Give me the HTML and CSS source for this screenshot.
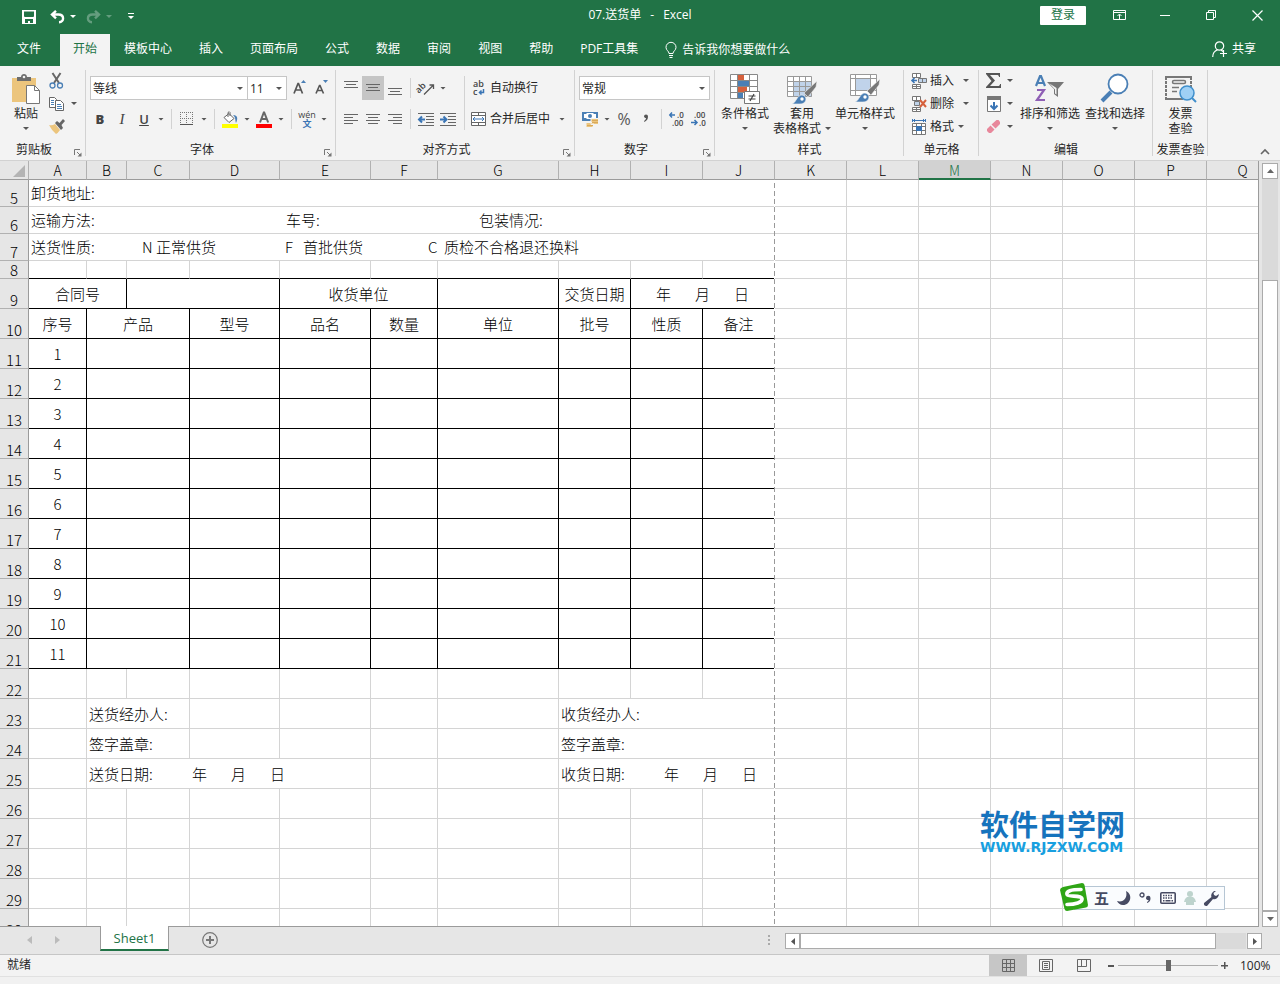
FILE: index.html
```html
<!DOCTYPE html>
<html lang="zh-CN">
<head>
<meta charset="utf-8">
<title>07.送货单 - Excel</title>
<link rel="stylesheet" href="styles.css">
</head>
<body>
<header class="titlebar">
  <div class="quick">
    <button class="qbtn" aria-label="保存"><svg width="14" height="14" viewBox="0 0 14 14"><path fill="#fff" fill-rule="evenodd" d="M0 0h14v14H0zM2 1.500v5l1 .5h8l1-.5v-5zM3 9v4h3v-2h2v2h3V9z"/></svg></button>
    <button class="qbtn undo" aria-label="撤消"><svg width="15" height="14" viewBox="0 0 15 14" fill="none" stroke="#fff" stroke-width="2.400"><path d="M6 .8 2 4.500l4 3.800M2 4.500h6.500c6 0 6 7.500.5 7.700"/></svg><span class="caret"></span></button>
    <button class="qbtn redo" aria-label="恢复"><svg width="15" height="14" viewBox="0 0 15 14" fill="none" stroke="#fff" stroke-width="2.400"><path d="M9 .8 13 4.500 9 8.300M13 4.500H6.500c-6 0-6 7.500-.5 7.700"/></svg><span class="caret"></span></button>
    <button class="qbtn" aria-label="自定义快速访问工具栏"><svg width="6" height="7" viewBox="0 0 6 7"><path fill="#fff" d="M0 0h6v1H0zM0 3h6L3 6z"/></svg></button>
  </div>
  <h1 class="doc"><span>07.送货单</span><span>-</span><span>Excel</span></h1>
  <div class="winctl">
    <button class="login">登录</button>
    <button class="wbtn" aria-label="功能区显示选项"><svg width="13" height="11" viewBox="0 0 13 11" fill="none" stroke="#fff"><path d="M.5.500h12v9H.5zM1 2.500h11M6.500 9V4.500M4.500 6l2-2 2 2"/></svg></button>
    <button class="wbtn" aria-label="最小化"><svg width="11" height="11" viewBox="0 0 11 11"><path d="M0 5h10v1H0z" fill="#fff"/></svg></button>
    <button class="wbtn" aria-label="还原"><svg width="11" height="11" viewBox="0 0 11 11" fill="none" stroke="#fff"><path d="M.5 2.500h7v7h-7zM2.500 2V.5h7v7H8"/></svg></button>
    <button class="wbtn" aria-label="关闭"><svg width="11" height="11" viewBox="0 0 11 11" stroke="#fff" stroke-width="1.200"><path d="m.5.500 10 10M10.500.500l-10 10"/></svg></button>
  </div>
</header>

<nav class="tabs">
  <button class="tab file">文件</button>
  <button class="tab active">开始</button>
  <button class="tab">模板中心</button>
  <button class="tab">插入</button>
  <button class="tab">页面布局</button>
  <button class="tab">公式</button>
  <button class="tab">数据</button>
  <button class="tab">审阅</button>
  <button class="tab">视图</button>
  <button class="tab">帮助</button>
  <button class="tab">PDF工具集</button>
  <button class="tab tell"><svg width="12" height="16" viewBox="0 0 12 16" fill="none" stroke="#fff"><path d="M4 11.500C4 9 1 8.500 1 5.300a5 5 0 0 1 10 0C11 8.500 8 9 8 11.500zM4 13.500h4M4.500 15.500h3"/></svg>告诉我你想要做什么</button>
  <button class="tab share"><svg width="16" height="17" viewBox="0 0 16 17" fill="none" stroke="#fff" stroke-width="1.200"><circle cx="7.500" cy="5" r="4.200"/><path d="M.7 16c0-4 2-6 4.800-7.200M9 9l2 1.500M8 12.500h7M11.500 9v7"/></svg>共享</button>
</nav>

<section class="ribbon">
  <div class="group g-clip">
    <div class="body">
      <button class="big"><span class="pic"><svg width="28" height="30" viewBox="0 0 28 30"><path fill="#ecc57d" d="M0 4h24v24H0z"/><path fill="#6d6d6d" d="M5 7V3h4c0-4 6-4 6 0h4v4z"/><circle cx="12" cy="3" r="1.300" fill="#f3f3f3"/><path fill="#fff" stroke="#777" d="M14.500 11.500h8l5 5v13h-13z"/><path fill="none" stroke="#777" d="M22.500 11.500v5h5"/></svg></span>粘贴<span class="caret"></span></button>
      <div class="stack">
        <button class="ib" aria-label="剪切"><svg width="15" height="16" viewBox="0 0 15 16" fill="none"><path stroke="#666" stroke-width="2" d="M3.500 0 10 10M11.500 0 5 10"/><circle cx="3.500" cy="12.500" r="2.500" stroke="#4a7fb5" stroke-width="1.300"/><circle cx="11" cy="12.500" r="2.500" stroke="#4a7fb5" stroke-width="1.300"/></svg></button>
        <button class="ib" aria-label="复制"><svg width="15" height="14" viewBox="0 0 15 14" fill="#fff" stroke="#666"><path d="M.5.500h5l2 2v8h-7z"/><path d="M6.500 3.500h5l3 3v7h-8z"/><path stroke="#4a7fb5" d="M2 3.500h3M2 5.500h3M2 7.500h3M8 7.500h4M8 9.500h5M8 11.500h5"/></svg><span class="caret"></span></button>
        <button class="ib" aria-label="格式刷"><svg width="16" height="15" viewBox="0 0 16 15"><path fill="#ecc57d" d="M0 6q3 1 6-1l5 6q-2 3-4 4-4-3-7-9"/><path fill="#666" d="m6 4 2-2 2.500 2L14 0l2 2-3.500 4L14 9l-2 2z"/></svg></button>
      </div>
    </div>
    <div class="label"><span>剪贴板</span><button class="launch" aria-label="剪贴板设置"><svg width="8" height="8" viewBox="0 0 8 8"><path fill="none" stroke="#777" d="M.5 6V.500H6M3 3l3 3"/><path fill="#777" d="M7.500 3.500v4h-4z"/></svg></button></div>
  </div>

  <div class="group g-font">
    <div class="body rows">
      <div class="row">
        <span class="sel font"><select aria-label="字体"><option>等线</option></select></span><span class="sel size"><select aria-label="字号"><option>11</option></select></span>
        <button class="tb first" aria-label="增大字号"><svg width="14" height="16" viewBox="0 0 14 16"><path fill="none" stroke="#555" stroke-width="1.700" d="M1 13.500 5 3.500h.5l4 10M2.500 10h6"/><path fill="#4a7fb5" d="M8 3h5l-2.500-3z"/></svg></button>
        <button class="tb" aria-label="减小字号"><svg width="14" height="16" viewBox="0 0 14 16"><path fill="none" stroke="#555" stroke-width="1.600" d="M1 13.500 4.500 5.500H5l3.500 8M2.500 10.500h5"/><path fill="#4a7fb5" d="M8 0h5l-2.500 3z"/></svg></button>
      </div>
      <div class="row">
        <button class="tb glyph" aria-label="加粗"><b>B</b></button><button class="tb glyph" aria-label="倾斜"><i>I</i></button><button class="tb glyph" aria-label="下划线"><u>U</u></button><button class="cb" aria-label="下划线选项"><span class="caret"></span></button>
        <span class="sep"></span>
        <button class="tb" aria-label="边框"><svg width="14" height="14" viewBox="0 0 14 14" fill="none" stroke="#777"><path stroke-dasharray="1 1" d="M0 .5h13M.5 0v12M12.500 0v12M6.500 0v12M0 6.500h13"/><path stroke="#555" d="M0 12.500h13"/></svg></button><button class="cb" aria-label="边框选项"><span class="caret"></span></button>
        <span class="sep"></span>
        <button class="tb" aria-label="填充颜色"><svg width="16" height="17" viewBox="0 0 16 17"><path fill="#fff" stroke="#666" d="m2 6.500 5-4 5 5-5 4zM6 6V1.500q1.500-1.500 2 0V5"/><path fill="#4a7fb5" d="M11 4c5 0 5 4 3 8-1-3 0-5-3-8"/><path fill="#ff0" d="M0 13h16v4H0z"/></svg></button><button class="cb" aria-label="填充颜色选项"><span class="caret"></span></button>
        <button class="tb" aria-label="字体颜色"><svg width="16" height="17" viewBox="0 0 16 17"><path fill="none" stroke="#666" stroke-width="2" d="m4 11.500 3.800-10h.4l4 10M5.500 8h5"/><path fill="red" d="M0 13h16v4H0z"/></svg></button><button class="cb" aria-label="字体颜色选项"><span class="caret"></span></button>
        <span class="sep"></span>
        <button class="tb wen" aria-label="拼音"><span>wén</span><span class="zi">文</span></button><button class="cb" aria-label="拼音选项"><span class="caret"></span></button>
      </div>
    </div>
    <div class="label"><span>字体</span><button class="launch" aria-label="字体设置"><svg width="8" height="8" viewBox="0 0 8 8"><path fill="none" stroke="#777" d="M.5 6V.500H6M3 3l3 3"/><path fill="#777" d="M7.500 3.500v4h-4z"/></svg></button></div>
  </div>

  <div class="group g-align">
    <div class="body">
      <div class="rows">
        <div class="row">
          <button class="tb" aria-label="顶端对齐"><svg width="14" height="14" viewBox="0 0 14 14" stroke="#666"><path d="M0 .5h14M2 3.500h10M0 6.500h14"/></svg></button><button class="tb on" aria-label="垂直居中"><svg width="14" height="14" viewBox="0 0 14 14" stroke="#666"><path d="M0 3.500h14M2 6.500h10M0 9.500h14"/></svg></button><button class="tb" aria-label="底端对齐"><svg width="14" height="14" viewBox="0 0 14 14" stroke="#666"><path d="M0 7.500h14M2 10.500h10M0 13.500h14"/></svg></button>
          <span class="sep"></span>
          <button class="tb" aria-label="方向"><svg width="17" height="16" viewBox="0 0 17 16"><text x="-2" y="9" class="ab" transform="rotate(-45 5 8)">ab</text><path fill="none" stroke="#555" stroke-width="1.300" d="m6 14.500 9-9M11.500 5h4v4"/></svg></button><button class="cb" aria-label="方向选项"><span class="caret"></span></button>
        </div>
        <div class="row">
          <button class="tb" aria-label="左对齐"><svg width="14" height="12" viewBox="0 0 14 12" stroke="#666"><path d="M0 1.500h14M0 4.500h9M0 7.500h14M0 10.500h9"/></svg></button><button class="tb" aria-label="居中"><svg width="14" height="12" viewBox="0 0 14 12" stroke="#666"><path d="M0 1.500h14M2 4.500h10M0 7.500h14M2 10.500h10"/></svg></button><button class="tb" aria-label="右对齐"><svg width="14" height="12" viewBox="0 0 14 12" stroke="#666"><path d="M0 1.500h14M5 4.500h9M0 7.500h14M5 10.500h9"/></svg></button>
          <span class="sep"></span>
          <button class="tb" aria-label="减少缩进量"><svg width="17" height="13" viewBox="0 0 17 13" fill="none" stroke="#666"><path d="M0 .5h16M8 3.500h8M8 6.500h8M8 9.500h8M0 12.500h16"/><path stroke="#3a75b5" stroke-width="2" d="M7 6.500H1.500M4 3.500l-3 3 3 3"/></svg></button><button class="tb" aria-label="增加缩进量"><svg width="17" height="13" viewBox="0 0 17 13" fill="none" stroke="#666"><path d="M0 .5h16M8 3.500h8M8 6.500h8M8 9.500h8M0 12.500h16"/><path stroke="#3a75b5" stroke-width="2" d="M0 6.500h6M3.500 3.500l3 3-3 3"/></svg></button>
        </div>
      </div>
      <span class="sep tall"></span>
      <div class="rows">
        <button class="lb"><svg width="16" height="16" viewBox="0 0 16 16"><text x="2" y="7" class="ab">ab</text><text x="2" y="15" class="ab">c</text><path fill="none" stroke="#3a75b5" stroke-width="1.500" d="M12.500 9v3.500H8.500M10.500 10.500l-2 2 2 2"/></svg>自动换行</button>
        <button class="lb"><svg width="16" height="16" viewBox="0 0 16 16" fill="#fff" stroke="#666"><path d="M.5 1.500h14v13H.5zM.5 4.500h14M.5 11.500h14M7.500 1.500v3M7.500 11.500v3"/><path fill="none" stroke="#3a75b5" d="M2 8h11M4 6 2 8l2 2M11 6l2 2-2 2"/></svg>合并后居中<span class="caret far"></span></button>
      </div>
    </div>
    <div class="label"><span>对齐方式</span><button class="launch" aria-label="对齐设置"><svg width="8" height="8" viewBox="0 0 8 8"><path fill="none" stroke="#777" d="M.5 6V.500H6M3 3l3 3"/><path fill="#777" d="M7.500 3.500v4h-4z"/></svg></button></div>
  </div>

  <div class="group g-num">
    <div class="body rows">
      <div class="row"><span class="sel num"><select aria-label="数字格式"><option>常规</option></select></span></div>
      <div class="row">
        <button class="tb" aria-label="会计数字格式"><svg width="17" height="17" viewBox="0 0 17 17"><path fill="#4a7fb5" d="M0 1h16v9H0z"/><path fill="#fff" d="M2 3h2l1-1h6l1 1h2v4h-2l-1 1H5L4 7H2z"/><circle cx="8" cy="5" r="2" fill="#4a7fb5"/><path fill="#ecc57d" stroke="#f3f3f3" d="M9 7.500h7.500v6H9zM4 11.500h7v5H4z"/><path stroke="#d9a95a" d="M10 9.500h6M10 11.500h6M5 14.500h6"/></svg></button><button class="cb" aria-label="会计格式选项"><span class="caret"></span></button><button class="tb pct" aria-label="百分比样式">%</button><button class="tb" aria-label="千位分隔样式"><svg width="8" height="14" viewBox="0 0 8 14"><path fill="#555" d="M2 4.500a2 2 0 1 1 4 0C6 7 5 8.500 2.500 10L2 9c1.500-1 2-2 2-3-1 0-2-.6-2-1.500"/></svg></button>
        <span class="sep"></span>
        <button class="tb" aria-label="增加小数位数"><svg width="16" height="16" viewBox="0 0 16 16"><text x="8" y="7" class="dec">.0</text><text x="3" y="15" class="dec">.00</text><path fill="none" stroke="#3a75b5" stroke-width="1.500" d="M6 4H1M3 1.500.8 4 3 6.500"/></svg></button><button class="tb" aria-label="减少小数位数"><svg width="16" height="16" viewBox="0 0 16 16"><text x="3" y="7" class="dec">.00</text><text x="8" y="15" class="dec">.0</text><path fill="none" stroke="#3a75b5" stroke-width="1.500" d="M0 11.500h5.500M3.500 9l2.500 2.500L3.500 14"/></svg></button>
      </div>
    </div>
    <div class="label"><span>数字</span><button class="launch" aria-label="数字设置"><svg width="8" height="8" viewBox="0 0 8 8"><path fill="none" stroke="#777" d="M.5 6V.500H6M3 3l3 3"/><path fill="#777" d="M7.500 3.500v4h-4z"/></svg></button></div>
  </div>

  <div class="group g-style">
    <div class="body">
      <button class="big"><span class="pic"><svg width="30" height="30" viewBox="0 0 30 30"><path fill="#fff" stroke="#888" d="M.5.500h27v24H.5zM.5 6.500h27M.5 12.500h27M.5 18.500h27M7.500.500v24M19.500.500v24"/><path fill="#d6603c" d="M8 1h6v5H8zM8 13h9v5H8z"/><path fill="#4a7fb5" d="M8 7h11v5H8zM8 19h5v5H8z"/><path fill="#fff" stroke="#777" d="M14.500 17.500h15v12h-15z"/><path stroke="#444" stroke-width="1.200" d="M18.500 22h7M18.500 25h7M24 20l-4 7"/></svg></span>条件格式<span class="caret"></span></button>
      <button class="big"><span class="pic"><svg width="30" height="30" viewBox="0 0 30 30"><path fill="#fff" d="M1 2h24v21H1z"/><path fill="#c0d3ea" d="M7 7h18v16H7z"/><path fill="none" stroke="#999" d="M.5 2.500h24v20H.5zM.5 7.500h24M.5 12.500h24M.5 17.500h24M6.500 2.500v20M12.500 2.500v20M18.500 2.500v20"/><path fill="#777" stroke="#f3f3f3" stroke-width=".6" d="m30 7-1 6-8 10-4-4z"/><path fill="#4a7fb5" stroke="#f3f3f3" stroke-width=".6" d="M5 30c4-1 5-9 10-9 6 1 5 9-2 9z"/><circle cx="15" cy="25" r="1.700" fill="#fff"/></svg></span>套用<span class="line">表格格式 <span class="caret"></span></span></button>
      <button class="big"><span class="pic"><svg width="30" height="30" viewBox="0 0 30 30"><path fill="#fff" stroke="#999" d="M.5.500h26v21H.5zM.5 4.500h26M.5 16.500h26M5.500.500v21M20.500.500v21"/><path fill="#c0d3ea" d="M6 5h14v11H6z"/><path fill="#777" stroke="#f3f3f3" stroke-width=".6" d="m30 5-1 6-8 10-4-4z"/><path fill="#4a7fb5" stroke="#f3f3f3" stroke-width=".6" d="M5 28c4-1 5-9 10-9 6 1 5 9-2 9z"/><circle cx="15" cy="23" r="1.700" fill="#fff"/></svg></span>单元格样式<span class="caret"></span></button>
    </div>
    <div class="label"><span>样式</span></div>
  </div>

  <div class="group g-cell">
    <div class="body stack">
      <button class="lb"><svg width="16" height="16" viewBox="0 0 16 16" fill="#fff" stroke="#777"><path d="M1.500.500h8v4h-8zM5.500.500v4M1.500 11.500h8v4h-8zM5.500 11.500v4M1.500 13.500h8"/><path fill="#c0d3ea" d="M7.500 5.500h8v4h-8zM11.500 5.500v4"/><path fill="none" stroke="#3a75b5" stroke-width="1.600" d="M6 7.500H1M3.500 5 1 7.500 3.500 10"/></svg>插入<span class="caret"></span></button>
      <button class="lb"><svg width="16" height="16" viewBox="0 0 16 16" fill="#fff" stroke="#777"><path d="M1.500.500h8v4h-8zM5.500.500v4M1.500 11.500h8v4h-8zM5.500 11.500v4M1.500 13.500h8"/><path fill="#c0d3ea" d="M3.500 5.500h5v4h-5z"/><path stroke="#d6603c" stroke-width="2" d="m9 4 6 7M15 4l-6 7"/></svg>删除<span class="caret"></span></button>
      <button class="lb short"><svg width="16" height="16" viewBox="0 0 16 16" fill="#fff" stroke="#777"><path d="M1.500 4.500h13v11h-13zM1.500 7.500h13M1.500 11.500h13M5.500 4.500v11M10.500 4.500v11"/><path fill="#3a75b5" stroke="none" d="M5 7h6v5H5z"/><path fill="none" stroke="#3a75b5" d="M1.500 0v3M14.500 0v3M2 1.500h12M4 0 2.500 1.500 4 3M12 0l1.500 1.500L12 3"/></svg>格式<span class="caret"></span></button>
    </div>
    <div class="label"><span>单元格</span></div>
  </div>

  <div class="group g-edit">
    <div class="body">
      <div class="stack">
        <button class="ib" aria-label="自动求和"><svg width="16" height="16" viewBox="0 0 16 16"><path fill="#555" d="M0 0h14v4h-1c0-1.500-1-2-2-2H4l5 5.500L4 13h8c1 0 2-.5 2-2h1v4H0v-1l5.500-6L0 1z"/></svg><span class="caret"></span></button>
        <button class="ib" aria-label="填充"><svg width="16" height="16" viewBox="0 0 16 16"><path fill="#fff" stroke="#777" d="M1.500.500h13v15h-13z"/><path fill="#777" d="M1 0h14v4H1z"/><path fill="none" stroke="#3a75b5" stroke-width="2" d="M8 6v7M4.500 9.500 8 13l3.500-3.500"/></svg><span class="caret"></span></button>
        <button class="ib" aria-label="清除"><svg width="16" height="16" viewBox="0 0 16 16"><path fill="#e8879b" d="m5.500 5.500 5-4.500h2L14 3v2L9.500 9.500zM4.500 6.500l4 4L5 14H3l-2-2v-2z"/></svg><span class="caret"></span></button>
      </div>
      <button class="big"><span class="pic"><svg width="30" height="30" viewBox="0 0 30 30"><path fill="none" stroke="#4a7fb5" stroke-width="2.200" d="m1 12 4-10h1l4 10M3 9h6"/><path fill="none" stroke="#8f5fb5" stroke-width="2.200" d="M2 16h7L2 26h8"/><path fill="#777" d="M12 8h17l-6 7v8l-4-3v-5z"/><path fill="#f3f3f3" d="m14.500 9.500 5.500 6v4l1.500 1V14z"/></svg></span>排序和筛选<span class="caret"></span></button>
      <button class="big"><span class="pic"><svg width="30" height="30" viewBox="0 0 30 30"><path stroke="#4a7fb5" stroke-width="4" d="m2 27 9-9"/><circle cx="18" cy="10" r="9.500" fill="#fff" stroke="#4a7fb5" stroke-width="1.800"/></svg></span>查找和选择<span class="caret"></span></button>
    </div>
    <div class="label"><span>编辑</span></div>
  </div>

  <div class="group g-inv">
    <div class="body">
      <button class="big"><span class="pic"><svg width="32" height="30" viewBox="0 0 32 30" fill="none" stroke="#777"><path stroke-width="2" d="M0 3h27M0 25h18"/><path stroke-width="2" stroke-dasharray="3 1" d="M1 3v22M26 3v10"/><rect x="7.500" y="6.500" width="13" height="3" rx="1.500" stroke-width="1.500"/><path stroke-width="1.500" d="M7 13.500h7M7 17.500h5"/><circle cx="22" cy="19" r="7" fill="#9fd0f5" stroke="#3f8fcc" stroke-width="1.500"/><path stroke="#3f8fcc" stroke-width="2" d="m27 24 4 4"/></svg></span>发票<span class="line">查验</span></button>
    </div>
    <div class="label"><span>发票查验</span></div>
  </div>
  <button class="collapse" aria-label="折叠功能区"><svg width="10" height="6" viewBox="0 0 10 6" fill="none" stroke="#666" stroke-width="1.600"><path d="m1 5 4-4 4 4"/></svg></button>
</section>

<main class="sheet">
  <div class="pane">
    <table class="cells">
      <colgroup><col class="w29"><col class="w58"><col class="w40"><col class="w63"><col class="w90"><col class="w91"><col class="w67"><col class="w121"><col span="10" class="w72"></colgroup>
      <thead><tr><th class="corner"><svg width="12" height="12" viewBox="0 0 12 12"><path fill="#b4b4b4" d="M12 0v12H0z"/></svg></th><th>A</th><th>B</th><th>C</th><th>D</th><th>E</th><th>F</th><th>G</th><th>H</th><th>I</th><th class="pagebreak">J</th><th>K</th><th>L</th><th class="current">M</th><th>N</th><th>O</th><th>P</th><th>Q</th></tr></thead>
      <tbody class="low">
        <tr><th>5</th><td colspan="10">卸货地址:</td><td><td><td><td><td><td><td></tr>
        <tr><th>6</th><td colspan="10"><div class="ship"><span>运输方法:</span><span>车号:</span><span>包装情况:</span></div></td><td><td><td><td><td><td><td></tr>
        <tr><th>7</th><td colspan="10"><div class="kind"><span>送货性质:</span><span>N 正常供货</span><span>F   首批供货</span><span>C  质检不合格退还换料</span></div></td><td><td><td><td><td><td><td></tr>
        <tr class="thin"><th>8</th><td><td><td><td><td><td><td><td><td><td><td><td><td><td><td><td><td></tr>
      </tbody>
      <tbody class="form">
        <tr><th>9</th><td colspan="2">合同号</td><td colspan="2"><td colspan="2">收货单位</td><td><td>交货日期</td><td colspan="2"><div class="ymd"><span>年</span><span>月</span><span>日</span></div></td><td><td><td><td><td><td><td></tr>
        <tr><th>10</th><td>序号</td><td colspan="2">产品</td><td>型号</td><td>品名</td><td>数量</td><td>单位</td><td>批号</td><td>性质</td><td>备注</td><td><td><td><td><td><td><td></tr>
        <tr><th>11</th><td>1</td><td colspan="2"><td><td><td><td><td><td><td><td><td><td><td><td><td><td></tr>
        <tr><th>12</th><td>2</td><td colspan="2"><td><td><td><td><td><td><td><td><td><td><td><td><td><td></tr>
        <tr><th>13</th><td>3</td><td colspan="2"><td><td><td><td><td><td><td><td><td><td><td><td><td><td></tr>
        <tr><th>14</th><td>4</td><td colspan="2"><td><td><td><td><td><td><td><td><td><td><td><td><td><td></tr>
        <tr><th>15</th><td>5</td><td colspan="2"><td><td><td><td><td><td><td><td><td><td><td><td><td><td></tr>
        <tr><th>16</th><td>6</td><td colspan="2"><td><td><td><td><td><td><td><td><td><td><td><td><td><td></tr>
        <tr><th>17</th><td>7</td><td colspan="2"><td><td><td><td><td><td><td><td><td><td><td><td><td><td></tr>
        <tr><th>18</th><td>8</td><td colspan="2"><td><td><td><td><td><td><td><td><td><td><td><td><td><td></tr>
        <tr><th>19</th><td>9</td><td colspan="2"><td><td><td><td><td><td><td><td><td><td><td><td><td><td></tr>
        <tr><th>20</th><td>10</td><td colspan="2"><td><td><td><td><td><td><td><td><td><td><td><td><td><td></tr>
        <tr><th>21</th><td>11</td><td colspan="2"><td><td><td><td><td><td><td><td><td><td><td><td><td><td></tr>
      </tbody>
      <tbody>
        <tr><th>22</th><td><td><td><td><td><td><td><td><td><td><td><td><td><td><td><td><td></tr>
        <tr><th>23</th><td><td colspan="2">送货经办人:</td><td><td><td><td><td colspan="3">收货经办人:</td><td><td><td><td><td><td><td></tr>
        <tr><th>24</th><td><td colspan="2">签字盖章:</td><td><td><td><td><td colspan="3">签字盖章:</td><td><td><td><td><td><td><td></tr>
        <tr><th>25</th><td><td colspan="4"><div class="dated"><span>送货日期:</span><div class="ymd"><span>年</span><span>月</span><span>日</span></div></div></td><td><td><td colspan="3"><div class="dated"><span>收货日期:</span><div class="ymd"><span>年</span><span>月</span><span>日</span></div></div></td><td><td><td><td><td><td><td></tr>
        <tr><th>26</th><td><td><td><td><td><td><td><td><td><td><td><td><td><td><td><td><td></tr>
        <tr><th>27</th><td><td><td><td><td><td><td><td><td><td><td><td><td><td><td><td><td></tr>
        <tr><th>28</th><td><td><td><td><td><td><td><td><td><td><td><td><td><td><td><td><td></tr>
        <tr><th>29</th><td><td><td><td><td><td><td><td><td><td><td><td><td><td><td><td><td></tr>
        <tr><th>30</th><td><td><td><td><td><td><td><td><td><td><td><td><td><td><td><td><td></tr>
      </tbody>
    </table>
  </div>
  <div class="vscroll">
    <button class="sbtn" aria-label="向上滚动"><svg width="7" height="4" viewBox="0 0 7 4"><path fill="#666" d="M0 4h7L3.500 0z"/></svg></button>
    <div class="vtrack"><div class="vthumb"></div></div>
    <button class="sbtn" aria-label="向下滚动"><svg width="7" height="4" viewBox="0 0 7 4"><path fill="#666" d="M0 0h7L3.500 4z"/></svg></button>
  </div>
  <div class="mark"><span class="name">软件自学网</span><span class="url">WWW.RJZXW.COM</span></div>
  <div class="ime">
    <svg class="logo" width="28" height="28" viewBox="0 0 28 28"><path fill="#2fa516" d="M3 4 22 0q2 0 2.500 2L28 22q0 2-2 2.500L7 28q-2 0-2.500-2L0 7q0-2 3-3"/><path fill="none" stroke="#fff" stroke-width="3.600" stroke-linecap="round" d="M21 6.500C11 6.500 6 8 7 11.500c1 3 14 0 15 4 .8 4-7 6-15 6"/></svg>
    <span class="wu">五</span>
    <svg width="14" height="14" viewBox="0 0 14 14"><path fill="#474b63" d="M9 0c7 3 5 14-3 14-3 0-5-2-6-4 6 2 11-3 9-10"/></svg>
    <svg width="13" height="14" viewBox="0 0 13 14"><circle cx="3" cy="4" r="2" fill="none" stroke="#474b63" stroke-width="1.300"/><path fill="#474b63" d="M7 7a2 2 0 1 1 4.500 0c0 3-1 4-3.500 5v-1c1-.5 1.500-1 1.500-2C8 9 7 8.500 7 7"/></svg>
    <svg width="16" height="12" viewBox="0 0 16 12"><rect x=".8" y=".8" width="14.400" height="10.400" rx="1" fill="#fff" stroke="#474b63" stroke-width="1.600"/><path stroke="#474b63" stroke-width="1.500" d="M3 3.500h10M3 6h10" stroke-dasharray="1.500 1"/><path stroke="#474b63" stroke-width="1.500" d="M3 8.700h1.500M5.500 8.700h5M11.500 8.700H13"/></svg>
    <svg width="12" height="14" viewBox="0 0 12 14"><circle cx="6" cy="3" r="3" fill="#bdd3cd"/><path fill="#bdd3cd" d="M3 6h6q3 2 3 5h-2v3H2v-3H0q0-3 3-5"/></svg>
    <svg width="15" height="15" viewBox="0 0 15 15"><path fill="#474b63" d="M10 0 8 2C7 4 7 5 7.500 6L0 12c-.5 2 1 3.500 3 3l6-7c2 .7 4 0 5.500-3L15 3l-3 2-2-1-.5-2L12 0z"/></svg>
  </div>
</main>

<div class="bookbar">
  <button class="nav" aria-label="上一个工作表"><svg width="5" height="8" viewBox="0 0 5 8"><path fill="#bbb" d="M5 0v8L0 4z"/></svg></button>
  <button class="nav" aria-label="下一个工作表"><svg width="5" height="8" viewBox="0 0 5 8"><path fill="#bbb" d="M0 0v8l5-4z"/></svg></button>
  <button class="leaf">Sheet1</button>
  <button class="add" aria-label="新工作表"><svg width="16" height="16" viewBox="0 0 16 16" fill="none" stroke="#777"><circle cx="8" cy="8" r="7.300" stroke-width="1.200"/><path stroke-width="2" d="M4 8h8M8 4v8"/></svg></button>
  <span class="grip"></span>
  <div class="hscroll">
    <button class="sbtn" aria-label="向左滚动"><svg width="4" height="7" viewBox="0 0 4 7"><path fill="#555" d="M4 0v7L0 3.500z"/></svg></button>
    <div class="htrack"><div class="hthumb"></div></div>
    <button class="sbtn" aria-label="向右滚动"><svg width="4" height="7" viewBox="0 0 4 7"><path fill="#555" d="M0 0v7l4-3.500z"/></svg></button>
  </div>
</div>

<footer class="status">
  <span class="ready">就绪</span>
  <button class="view on" aria-label="普通"><svg width="13" height="13" viewBox="0 0 13 13" fill="none" stroke="#666"><path d="M.5.500h12v12H.5zM4.500.500v12M8.500.500v12M.5 4.500h12M.5 8.500h12"/></svg></button>
  <button class="view" aria-label="页面布局视图"><svg width="14" height="13" viewBox="0 0 14 13" fill="none" stroke="#666"><path d="M.5.500h13v12H.5zM3.500 2.500h7v8h-7zM5 4.500h4M5 6.500h4M5 8.500h4"/></svg></button>
  <button class="view" aria-label="分页预览"><svg width="14" height="13" viewBox="0 0 14 13" fill="none" stroke="#666"><path d="M.5.500h13v12H.5zM4.500.500v7M9.500.500v7M.5 7.500h9"/></svg></button>
  <button class="zoom out" aria-label="缩小"><svg width="7" height="7" viewBox="0 0 7 7"><path fill="#555" d="M0 3h6v2H0z"/></svg></button>
  <input class="slider" type="range" min="0" max="100" value="50" aria-label="显示比例">
  <button class="zoom" aria-label="放大"><svg width="7" height="7" viewBox="0 0 7 7"><path fill="#555" d="M0 3h7v1.500H0zM3 0h1.500v7H3z"/></svg></button>
  <span class="percent">100%</span>
</footer>
<div class="edge"></div>
</body>
</html>
```
FILE: styles.css
```css
* { box-sizing: border-box; }
body {
  margin: 0;
  height: 100vh;
  display: flex;
  flex-direction: column;
  overflow: hidden;
  background: #f3f3f3;
  color: #262626;
  font: 12px/16px "Open Sans", "Noto Sans CJK SC", sans-serif;
}
button, select {
  font: inherit;
  color: inherit;
  background: none;
  border: 0;
  border-radius: 0;
  padding: 0;
  margin: 0;
}
button { display: flex; align-items: center; justify-content: center; white-space: nowrap; flex: none; }
svg { display: block; flex: none; overflow: visible; }
.caret {
  flex: none;
  width: 6px;
  height: 3px;
  background: #555;
  clip-path: polygon(0 0, 100% 0, 50% 100%);
}

/* title bar */
.titlebar {
  display: grid;
  grid-template-columns: 1fr auto 1fr;
  align-items: center;
  height: 34px;
  padding-bottom: 4px;
  background: #217346;
  color: #fff;
}
.titlebar .caret { background: #fff; }
.quick { display: flex; align-items: center; padding: 3px 0 0 22px; gap: 14px; }
.qbtn { gap: 5px; }
.redo { opacity: .3; margin: 0 2px 0 -4px; }
.doc { display: flex; gap: 9px; margin: 0; font-size: 12px; font-weight: 400; }
.winctl { display: flex; align-items: center; justify-content: flex-end; }
.login { width: 46px; height: 19px; margin-right: 10px; background: #fff; color: #217346; border-radius: 1px; }
.wbtn { width: 46px; height: 30px; }

/* ribbon tabs */
.tabs { display: flex; gap: 1px; height: 32px; padding-left: 4px; background: #217346; color: #fff; }
.tab { padding: 0 13px 2px; }
.file { margin-right: 5px; }
.active { background: #f3f3f3; color: #217346; }
.tell { gap: 5px; padding-bottom: 0; }
.share { margin-left: auto; padding-right: 24px; gap: 4px; }

/* ribbon */
.ribbon { display: flex; height: 95px; border-bottom: 1px solid #d2d2d2; background: #f3f3f3; }
.group { position: relative; display: flex; flex-direction: column; flex: none; }
.group::after { content: ""; position: absolute; right: 0; top: 4px; bottom: 4px; width: 1px; background: #d2d2d2; }
.body { display: flex; height: 75px; }
.label { display: flex; align-items: center; justify-content: center; height: 18px; position: relative; }
.launch { position: absolute; right: 4px; bottom: 2px; }
.g-clip { width: 86px; }
.g-clip .label { padding-right: 18px; }
.g-font { width: 250px; }
.g-font .label { padding-right: 18px; }
.g-align { width: 239px; }
.g-align .label { padding-right: 18px; }
.g-num { width: 140px; }
.g-num .label { padding-right: 18px; }
.g-style { width: 189px; }
.g-cell { width: 75px; }
.g-edit { width: 174px; }
.g-inv { width: 55px; }

.big { flex-direction: column; justify-content: flex-start; line-height: 15px; padding-top: 8px; }
.big .pic { height: 32px; }
.big > .caret { margin-top: 6px; }
.big .line { display: flex; align-items: center; gap: 4px; }
.stack { display: flex; flex-direction: column; padding-top: 3px; }
.ib { height: 23px; gap: 7px; justify-content: flex-start; }
.rows { display: flex; flex-direction: column; gap: 7px; padding-top: 10px; }
.row { display: flex; align-items: center; height: 24px; }
.tb { width: 22px; height: 24px; }
.cb { width: 12px; height: 24px; }
.tb.on { background: #c5c5c5; }
.sep { width: 1px; height: 20px; margin: 0 4px; background: #d2d2d2; flex: none; }
.sep.tall { height: 54px; margin-top: 10px; }
.lb { height: 24px; gap: 3px; justify-content: flex-start; }
.lb .far { margin-left: 6px; }

.g-clip .body { padding-left: 8px; gap: 5px; }
.g-clip .big { width: 36px; }
.g-font .body { padding-left: 3px; }
.g-align .body { padding-left: 4px; }
.g-align .sep.tall { margin-left: 5px; margin-right: 6px; }
.g-num .body { padding-left: 4px; }
.g-style .body { padding-left: 6px; gap: 4px; }
.g-cell .body { padding-left: 7px; }
.g-cell .lb { height: 23px; }
.g-cell .lb .caret { margin-left: 6px; }
.g-cell .short .caret { margin-left: 1px; }
.g-edit .body { padding-left: 7px; gap: 5px; }
.g-edit .ib { width: 29px; gap: 5px; }
.g-inv .body { justify-content: center; }

.sel { position: relative; display: flex; height: 24px; border: 1px solid #c6c6c6; background: #fff; }
.sel::after {
  content: "";
  position: absolute;
  right: 4px;
  top: 10px;
  width: 6px;
  height: 3px;
  background: #555;
  clip-path: polygon(0 0, 100% 0, 50% 100%);
  pointer-events: none;
}
.sel select { appearance: none; width: 100%; padding: 2px 2px 0; font-size: 12px; }
.sel.font { width: 158px; margin-left: 1px; }
.sel.size { width: 40px; margin-left: -1px; }
.sel.num { width: 131px; }
.tb.first { margin-left: 2px; }
.glyph { font-size: 13px; font-weight: 600; color: #444; }
.glyph i { font-family: "Liberation Serif", serif; font-size: 15px; font-weight: 400; }
.wen { flex-direction: column; font-size: 9px; line-height: 9px; color: #444; }
.wen .zi { color: #3a75b5; font-weight: 700; }
.pct { font-size: 16px; color: #555; }
.ab { font: 600 9px "Open Sans", sans-serif; fill: #444; }
.dec { font: 600 8px "Open Sans", sans-serif; fill: #444; }
.collapse { align-self: flex-end; margin: 0 10px 5px auto; }

/* worksheet */
.sheet { position: relative; flex: 1; min-height: 0; display: flex; background: #e6e6e6; }
.pane { flex: 1; min-width: 0; overflow: hidden; background: #fff; border-right: 1px solid #9b9b9b; border-bottom: 1px solid #9b9b9b; }
.cells {
  table-layout: fixed;
  width: 1279px;
  min-width: 100%;
  border-spacing: 0;
  font-family: "Noto Sans CJK SC", sans-serif;
  font-size: 15px;
  font-weight: 300;
  line-height: 17px;
  color: #000;
}
.w29 { width: 29px; }
.w40 { width: 40px; }
.w58 { width: 58px; }
.w63 { width: 63px; }
.w67 { width: 67px; }
.w72 { width: 72px; }
.w90 { width: 90px; }
.w91 { width: 91px; }
.w121 { width: 121px; }
.cells tr { height: 30px; }
.cells td { height: 30px; padding: 0 2px; border: 0 solid #d4d4d4; border-width: 0 1px 1px 0; white-space: nowrap; overflow: hidden; }
.cells th { padding: 0; font-weight: 300; background: #e6e6e6; border: 0 solid #b1b1b1; border-width: 0 1px 1px 0; }
.cells thead tr { height: 19px; }
.cells thead th { height: 19px; padding-top: 1px; font-size: 14px; border-bottom-color: #9b9b9b; position: relative; }
.cells thead .current { background: #d2d2d2; color: #217346; border-bottom: 2px solid #217346; line-height: 16px; }
.cells .corner svg { margin: 1px 3px 0 auto; }
.cells tbody th { vertical-align: bottom; border-right-color: #9b9b9b; }
.cells .low tr, .cells .low td { height: 27px; }
.cells .low td { padding-bottom: 2px; }
.cells .low .thin, .cells .low .thin td { height: 18px; }
.cells td:nth-last-child(8) { border-right-color: #fff; }
.thin td:not(:nth-last-child(-n+7)) { border-bottom-color: #000; }
.form td:not(:nth-last-child(-n+7)) { border-color: #000; text-align: center; }
.form td:nth-last-child(8):nth-last-child(8) { border-right-color: #fff; }
.pagebreak::after {
  content: "";
  position: absolute;
  top: 19px;
  right: -1px;
  width: 1px;
  height: 100vh;
  background: repeating-linear-gradient(#fff 0 3px, #999 3px 8px);
}
.ship, .kind, .dated { display: grid; white-space: pre; }
.ship { grid-template-columns: 255px 193px auto; }
.kind { grid-template-columns: 111px 143px 143px auto; }
.dated { grid-template-columns: 103px auto; }
.ymd { display: flex; gap: 24px; }
.form .ymd { justify-content: center; }

.vscroll { display: flex; flex-direction: column; width: 21px; padding: 2px 2px 0 3px; }
.sbtn { width: 16px; height: 16px; border: 1px solid #ababab; background: #fff; }
.vtrack { flex: 1; background: #dadada; padding-top: 101px; display: flex; }
.vthumb { flex: 1; background: #fff; border: 1px solid #ababab; }

.mark { position: absolute; right: 155px; bottom: 73px; display: flex; flex-direction: column; }
.name { font: 700 29px/34px "Noto Sans CJK SC", sans-serif; color: #1673bd; }
.url { font: 700 14px/14px "DejaVu Sans", sans-serif; color: #189fe0; }
.ime {
  position: absolute;
  right: 55px;
  bottom: 17px;
  display: flex;
  align-items: center;
  gap: 8px;
  height: 24px;
  padding-right: 5px;
  background: #fafcfe;
  border: 1px solid #b6c6d4;
}
.logo { margin: 0 -2px 2px -15px; }
.wu { font: 700 15px/20px "Noto Sans CJK SC", sans-serif; color: #474b63; }

/* sheet tabs */
.bookbar { display: flex; align-items: flex-start; height: 27px; background: #e6e6e6; }
.nav { width: 28px; height: 26px; }
.nav:first-child { margin-left: 15px; }
.leaf {
  position: relative;
  width: 69px;
  height: 25px;
  margin: -1px 0 0 29px;
  background: #fff;
  border: 1px solid #9b9b9b;
  border-width: 0 1px 2px;
  border-bottom-color: #217346;
  color: #217346;
  font-size: 13px;
}
.add { margin: 5px 0 0 33px; }
.grip { margin: 8px 15px 0 auto; width: 2px; height: 10px; background: repeating-linear-gradient(#aaa 0 2px, transparent 2px 4px); }
.hscroll { display: flex; flex: 0 1 477px; margin: 6px 18px 0 0; }
.hscroll .sbtn { width: 15px; }
.htrack { flex: 1; display: flex; height: 16px; padding-right: 30px; background: #dadada; margin-right: 1px; }
.hthumb { flex: 1; background: #fff; border: 1px solid #ababab; }

/* status bar */
.status { display: flex; align-items: center; height: 22px; border-top: 1px solid #c6c6c6; background: #f3f3f3; }
.ready { margin: 0 auto 2px 7px; }
.view { width: 38px; height: 21px; }
.view.on { background: #c6c6c6; }
.zoom { width: 7px; }
.zoom.out { margin-left: 5px; }
.slider { appearance: none; width: 100px; height: 12px; margin: 0 3px; background: linear-gradient(#ababab, #ababab) center / 100% 1px no-repeat; }
.slider::-webkit-slider-thumb { appearance: none; width: 5px; height: 11px; background: #666; }
.percent { width: 40px; margin-left: 12px; }
.edge { height: 8px; background: #f1f1f1; border-top: 1px solid #e1e1e1; flex: none; }
.titlebar, .tabs, .ribbon, .bookbar, .status { flex: none; }
```
